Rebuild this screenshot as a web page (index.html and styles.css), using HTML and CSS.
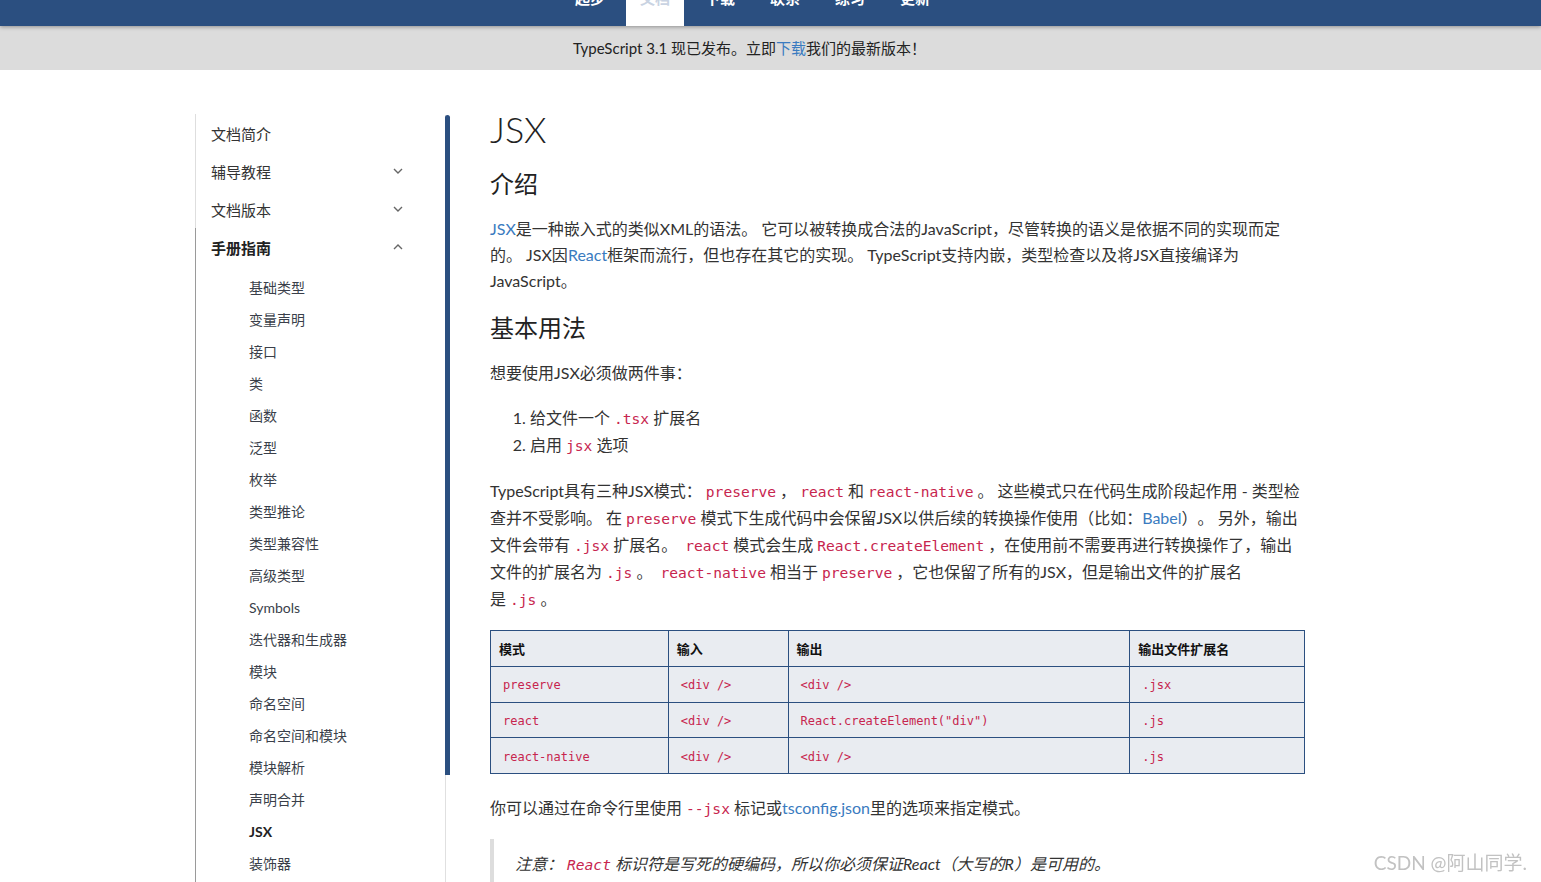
FILE: index.html
```html
<!DOCTYPE html>
<html lang="zh-CN">
<head>
<meta charset="utf-8">
<title>JSX · TypeScript中文手册</title>
<link rel="stylesheet" href="styles.css">
</head>
<body>
<header class="topnav">
  <a class="topnav-item"><span class="topnav-label">起步</span></a>
  <a class="topnav-item is-active"><span class="topnav-label">文档</span></a>
  <a class="topnav-item"><span class="topnav-label">下载</span></a>
  <a class="topnav-item"><span class="topnav-label">联系</span></a>
  <a class="topnav-item"><span class="topnav-label">练习</span></a>
  <a class="topnav-item"><span class="topnav-label">更新</span></a>
</header>
<div class="announce">TypeScript 3.1 现已发布。立即<a class="link">下载</a>我们的最新版本！</div>

<div class="page">
  <aside class="sidebar">
    <ul class="side-nav">
      <li class="side-group"><a class="side-link">文档简介</a></li>
      <li class="side-group"><a class="side-link">辅导教程<svg class="chev" viewBox="0 0 10 6" width="10" height="6"><polyline points="1,1 5,5 9,1"/></svg></a></li>
      <li class="side-group"><a class="side-link">文档版本<svg class="chev" viewBox="0 0 10 6" width="10" height="6"><polyline points="1,1 5,5 9,1"/></svg></a></li>
      <li class="side-group is-open"><a class="side-link is-strong">手册指南<svg class="chev" viewBox="0 0 10 6" width="10" height="6"><polyline points="1,5 5,1 9,5"/></svg></a>
        <ul class="side-sub">
          <li><a>基础类型</a></li>
          <li><a>变量声明</a></li>
          <li><a>接口</a></li>
          <li><a>类</a></li>
          <li><a>函数</a></li>
          <li><a>泛型</a></li>
          <li><a>枚举</a></li>
          <li><a>类型推论</a></li>
          <li><a>类型兼容性</a></li>
          <li><a>高级类型</a></li>
          <li><a>Symbols</a></li>
          <li><a>迭代器和生成器</a></li>
          <li><a>模块</a></li>
          <li><a>命名空间</a></li>
          <li><a>命名空间和模块</a></li>
          <li><a>模块解析</a></li>
          <li><a>声明合并</a></li>
          <li><a class="is-current">JSX</a></li>
          <li><a>装饰器</a></li>
          <li><a>Mixins</a></li>
          <li><a>三斜线指令</a></li>
        </ul>
      </li>
    </ul>
    <div class="side-scroll"><div class="side-thumb"></div></div>
  </aside>

  <main class="doc">
    <h1 class="doc-title">JSX</h1>
    <h2 class="doc-h2">介绍</h2>
    <p class="doc-p"><a class="link">JSX</a>是一种嵌入式的类似XML的语法。 它可以被转换成合法的JavaScript，尽管转换的语义是依据不同的实现而定的。 JSX因<a class="link">React</a>框架而流行，但也存在其它的实现。 TypeScript支持内嵌，类型检查以及将JSX直接编译为JavaScript。</p>
    <h2 class="doc-h2">基本用法</h2>
    <p class="doc-p">想要使用JSX必须做两件事：</p>
    <ol class="doc-list">
      <li>给文件一个<code>.tsx</code>扩展名</li>
      <li>启用<code>jsx</code>选项</li>
    </ol>
    <p class="doc-p doc-p-code">TypeScript具有三种JSX模式：<code>preserve</code>，<code>react</code>和<code>react-native</code>。 这些模式只在代码生成阶段起作用 - 类型检查并不受影响。 在<code>preserve</code>模式下生成代码中会保留JSX以供后续的转换操作使用（比如：<a class="link">Babel</a>）。 另外，输出文件会带有<code>.jsx</code>扩展名。 <code>react</code>模式会生成<code>React.createElement</code>，在使用前不需要再进行转换操作了，输出文件的扩展名为<code>.js</code>。 <code>react-native</code>相当于<code>preserve</code>，它也保留了所有的JSX，但是输出文件的扩展名是<code>.js</code>。</p>

    <table class="doc-table">
      <thead>
        <tr><th class="c1">模式</th><th class="c2">输入</th><th class="c3">输出</th><th class="c4">输出文件扩展名</th></tr>
      </thead>
      <tbody>
        <tr><td><code>preserve</code></td><td><code>&lt;div /&gt;</code></td><td><code>&lt;div /&gt;</code></td><td><code>.jsx</code></td></tr>
        <tr><td><code>react</code></td><td><code>&lt;div /&gt;</code></td><td><code>React.createElement("div")</code></td><td><code>.js</code></td></tr>
        <tr><td><code>react-native</code></td><td><code>&lt;div /&gt;</code></td><td><code>&lt;div /&gt;</code></td><td><code>.js</code></td></tr>
      </tbody>
    </table>

    <p class="doc-p">你可以通过在命令行里使用<code>--jsx</code>标记或<a class="link">tsconfig.json</a>里的选项来指定模式。</p>

    <blockquote class="doc-note">
      <p class="doc-p"><em>注意：<code>React</code>标识符是写死的硬编码，所以你必须保证React（大写的R）是可用的。</em></p>
    </blockquote>
  </main>
</div>

<div class="watermark">CSDN @阿山同学.</div>
</body>
</html>
```
FILE: styles.css
```css
html, body {
  margin: 0;
  height: 100%;
  overflow: hidden;
}

body {
  font-family: Lato, "Noto Sans CJK SC", sans-serif;
  color: #333;
  background: #fff;
  text-spacing-trim: space-all;
}

a { text-decoration: none; cursor: pointer; }

.link { color: #3a7bc0; }

/* top navigation (scrolled, mostly out of view) */
.topnav {
  position: relative;
  z-index: 2;
  display: flex;
  gap: 7px;
  height: 26px;
  padding-left: 561px;
  background: #2b4f80;
  box-shadow: 0 1px 4px rgba(0, 0, 0, 0.35);
  overflow: hidden;
}

.topnav-item {
  display: block;
  width: 58px;
  height: 26px;
  text-align: center;
  color: #fff;
  font-size: 15px;
  font-weight: 700;
}

.topnav-item.is-active {
  background: #fff;
  color: #c9d3e2;
}

.topnav-label {
  display: block;
  line-height: 16px;
  margin-top: -10px;
}

/* announcement */
.announce {
  height: 44px;
  line-height: 44px;
  padding-right: 42px;
  background: #dcdcdc;
  text-align: center;
  font-size: 15px;
  color: #222;
}

/* page */
.page {
  display: flex;
  gap: 40px;
  padding: 39px 0 0 195px;
}

/* sidebar */
.sidebar {
  display: flex;
  flex: none;
  margin-top: 5px;
}

.side-nav {
  width: 249px;
  margin: 0;
  padding: 0;
  list-style: none;
  border-left: 1px solid #dedede;
}

.side-group.is-open {
  margin-left: -1px;
  border-left: 1px solid #9a9a9a;
}

.side-link {
  display: flex;
  align-items: center;
  justify-content: space-between;
  height: 38px;
  padding: 0 42px 0 15px;
  font-size: 15px;
  color: #333;
}

.side-link.is-strong {
  font-weight: 700;
  color: #222;
}

.chev {
  fill: none;
  stroke: #666;
  stroke-width: 1.4;
}

.side-sub {
  margin: 0;
  padding: 6px 0 0;
  list-style: none;
}

.side-sub a {
  display: block;
  height: 32px;
  line-height: 32px;
  padding-left: 53px;
  font-size: 14px;
  color: #3a3f4a;
}

.side-sub a.is-current {
  font-weight: 700;
  color: #222;
}

.side-scroll {
  width: 5px;
  margin-top: 1px;
  box-shadow: inset 1px 0 #e0e0e0;
}

.side-thumb {
  height: 660px;
  background: #2b4f80;
  border-radius: 3px 3px 0 0;
}

/* document */
.doc {
  width: 815px;
  flex: none;
}

.doc-title {
  margin: 0 0 19px;
  font-size: 36px;
  font-weight: 300;
  line-height: 40px;
  color: #222;
}

.doc-h2 {
  margin: 0 0 16px;
  font-size: 24px;
  font-weight: 400;
  line-height: 32px;
  color: #222;
}

.doc-p {
  margin: 0 0 18px;
  font-size: 16px;
  line-height: 26px;
}

.doc-p-code {
  line-height: 27px;
}

.doc code {
  padding: 0 4px;
  font-family: "DejaVu Sans Mono", monospace;
  font-size: 14.6px;
  line-height: 1;
  color: #c7254e;
}

.doc-list {
  margin: 0 0 19px;
  padding-left: 40px;
  font-size: 16px;
  line-height: 27px;
}

.doc-table {
  width: 815px;
  margin-bottom: 21px;
  border-collapse: collapse;
  background: #e9ecf1;
  font-size: 13px;
}

.doc-table th,
.doc-table td {
  height: 35.75px;
  padding: 0 8px;
  border: 1px solid #2b4f80;
  text-align: left;
  box-sizing: border-box;
}

.doc-table th {
  font-weight: 700;
  color: #111;
}

.doc-table .c1 { width: 178px; }
.doc-table .c2 { width: 120px; }
.doc-table .c3 { width: 342px; }
.doc-table .c4 { width: 175px; }

.doc-table code {
  font-size: 12px;
}

.doc-note {
  margin: 0;
  padding: 12px 0 30px 21px;
  border-left: 4px solid #dddddd;
}

.doc-note .doc-p {
  margin: 0;
}

/* watermark */
.watermark {
  position: fixed;
  right: 14px;
  bottom: 7px;
  font-size: 19px;
  line-height: 24px;
  color: #c2c2c2;
}
```
